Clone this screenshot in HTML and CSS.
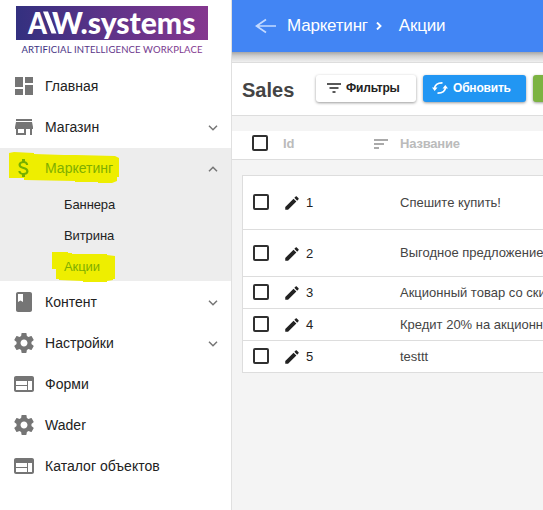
FILE: index.html
```html
<!DOCTYPE html>
<html lang="ru">
<head>
<meta charset="utf-8">
<title>AIW.systems</title>
<link rel="stylesheet" href="styles.css">
</head>
<body>
<svg width="0" height="0" class="defs">
  <symbol id="dash" viewBox="0 0 24 24"><path d="M3 13h8V3H3v10zm0 8h8v-6H3v6zm10 0h8V11h-8v10zm0-18v6h8V3h-8z"/></symbol>
  <symbol id="store" viewBox="0 0 24 24"><path d="M20 4H4v2h16V4zm1 10v-2l-1-5H4l-1 5v2h1v6h10v-6h4v6h2v-6h1zm-9 4H6v-4h6v4z"/></symbol>
  <symbol id="money" viewBox="0 0 24 24"><path d="M11.8 10.9c-2.27-.59-3-1.2-3-2.15 0-1.09 1.01-1.85 2.7-1.85 1.78 0 2.44.85 2.5 2.1h2.21c-.07-1.72-1.12-3.3-3.21-3.81V3h-3v2.16c-1.94.42-3.5 1.68-3.5 3.61 0 2.31 1.91 3.46 4.7 4.13 2.5.6 3 1.48 3 2.41 0 .69-.49 1.79-2.7 1.79-2.06 0-2.87-.92-2.98-2.1h-2.2c.12 2.19 1.76 3.42 3.68 3.83V21h3v-2.15c1.95-.37 3.5-1.5 3.5-3.55 0-2.84-2.43-3.81-4.7-4.4z"/></symbol>
  <symbol id="book" viewBox="0 0 24 24"><path fill-rule="evenodd" d="M18 2H6c-1.1 0-2 .9-2 2v16c0 1.100.9 2 2 2h12c1.100 0 2-.9 2-2V4c0-1.100-.9-2-2-2zM6 4h5v8l-2.500-1.500L6 12V4z"/></symbol>
  <symbol id="gear" viewBox="0 0 24 24"><path d="M19.430 12.980c.04-.32.070-.64.070-.98s-.03-.66-.07-.98l2.110-1.650c.19-.15.240-.42.120-.64l-2-3.460c-.12-.22-.39-.3-.61-.22l-2.490 1c-.52-.4-1.080-.73-1.690-.98l-.38-2.650C14.460 2.180 14.250 2 14 2h-4c-.25 0-.46.180-.49.420l-.38 2.650c-.61.250-1.170.59-1.690.980l-2.490-1c-.23-.09-.49 0-.61.220l-2 3.460c-.13.220-.07.490.12.640l2.110 1.650c-.04.320-.07.650-.07.980s.03.660.070.980l-2.110 1.650c-.19.150-.24.420-.12.640l2 3.460c.12.220.39.300.61.220l2.490-1c.52.400 1.080.730 1.690.980l.38 2.650c.03.240.24.420.49.420h4c.25 0 .46-.18.490-.42l.38-2.650c.61-.25 1.170-.59 1.690-.98l2.490 1c.23.090.49 0 .61-.22l2-3.460c.12-.22.070-.49-.12-.64l-2.110-1.650zM12 15.500c-1.930 0-3.500-1.570-3.500-3.500s1.570-3.500 3.500-3.500 3.500 1.570 3.500 3.500-1.570 3.500-3.500 3.500z"/></symbol>
  <symbol id="web" viewBox="0 0 24 24"><path fill-rule="evenodd" d="M20 4H4c-1.100 0-2 .9-2 2v12c0 1.100.9 2 2 2h16c1.100 0 2-.9 2-2V6c0-1.100-.9-2-2-2zM15 18H4v-4h11v4zM15 13H4V9h11v4zM20 18h-4V9h4v9z"/></symbol>
  <symbol id="down" viewBox="0 0 10 6"><path d="M1 .8l4 4 4-4" fill="none" stroke="currentColor" stroke-width="1.500"/></symbol>
  <symbol id="up" viewBox="0 0 10 6"><path d="M1 5.200l4-4 4 4" fill="none" stroke="currentColor" stroke-width="1.500"/></symbol>
  <symbol id="pencil" viewBox="0 0 24 24"><path d="M3 17.250V21h3.750L17.810 9.940l-3.750-3.750L3 17.250zM20.710 7.040c.39-.39.390-1.020 0-1.410l-2.340-2.340c-.39-.39-1.020-.39-1.410 0l-1.830 1.830 3.750 3.750 1.830-1.830z"/></symbol>
</svg>
<div class="app">
  <aside class="sidebar">
    <div class="logo">
      <svg width="192" height="50" viewBox="0 0 192 50">
        <defs><linearGradient id="brand" gradientUnits="userSpaceOnUse" x1="0" y1="0" x2="192" y2="0"><stop offset="0" stop-color="#33307f"/><stop offset=".5" stop-color="#603389"/><stop offset="1" stop-color="#85378f"/></linearGradient></defs>
        <rect width="192" height="34" fill="url(#brand)"/>
        <g class="logo-name"><text x="12" y="27.500" textLength="19" lengthAdjust="spacingAndGlyphs">A</text><text x="36" y="27.500" textLength="31" lengthAdjust="spacingAndGlyphs">W</text><text x="64.500" y="27.500" textLength="115" lengthAdjust="spacingAndGlyphs">.systems</text></g>
        <path d="M27 5.500h5l8.500 22h-5z" fill="#fff"/>
        <text class="logo-sub" x="5.500" y="46.500" textLength="181" fill="url(#brand)">ARTIFICIAL INTELLIGENCE WORKPLACE</text>
      </svg>
    </div>
    <nav>
      <a class="item upper"><svg class="ico"><use href="#dash"/></svg><span>Главная</span></a>
      <a class="item upper"><svg class="ico"><use href="#store"/></svg><span>Магазин</span><svg class="chev"><use href="#down"/></svg></a>
      <div class="group">
        <svg class="mark" width="120" height="134" viewBox="0 148 120 134"><path d="M9 153l5-1 20 1v1l30 1h12l39 1 4 2v19h-2v4l-5 2H98v-1H75v-1l-51-1v-2H9zM52 252h16v1h4v1h35v1l8 1v23h-2v1l-6 1v1H83v-1l-24-1v-1h-3v-10h-4z"/></svg>
        <a class="item upper current"><svg class="ico"><use href="#money"/></svg><span>Маркетинг</span><svg class="chev"><use href="#up"/></svg></a>
        <a class="sub">Баннера</a>
        <a class="sub">Витрина</a>
        <a class="sub current">Акции</a>
      </div>
      <a class="item"><svg class="ico"><use href="#book"/></svg><span>Контент</span><svg class="chev"><use href="#down"/></svg></a>
      <a class="item"><svg class="ico"><use href="#gear"/></svg><span>Настройки</span><svg class="chev"><use href="#down"/></svg></a>
      <a class="item"><svg class="ico"><use href="#web"/></svg><span>Форми</span></a>
      <a class="item"><svg class="ico"><use href="#gear"/></svg><span>Wader</span></a>
      <a class="item"><svg class="ico"><use href="#web"/></svg><span>Каталог объектов</span></a>
    </nav>
  </aside>
  <main>
    <header class="topbar">
      <svg class="back" width="22" height="16" viewBox="0 0 22 16"><path d="M11 1.500L1.500 8l9.500 6.500M1.500 8H21" fill="none" stroke="#c4daff" stroke-width="1.700"/></svg>
      <span>Маркетинг</span>
      <svg class="sep" width="6" height="8" viewBox="0 0 6 8"><path d="M1 .5L4.500 4 1 7.500" fill="none" stroke="#fff" stroke-width="1.900"/></svg>
      <span>Акции</span>
    </header>
    <div class="shade"></div>
    <section class="toolbar">
      <h1>Sales</h1>
      <button class="btn filter"><svg width="14" height="10" viewBox="0 0 14 10"><path d="M0 1h14M2.500 5h9M5.500 9h3" stroke="#222" stroke-width="1.700"/></svg><span>Фильтры</span></button>
      <button class="btn refresh"><svg width="16" height="12" viewBox="0 0 16 12"><path d="M2.500 7C2.500 3 5.500.8 10.500.9M13.500 5c0 4-3 6.200-8 6.100" fill="none" stroke="#fff" stroke-width="1.700"/><path d="M0 5.500h5.500L2.700 9zM10.500 6.500L13.300 3 16 6.500z" fill="#fff"/></svg><span>Обновить</span></button>
      <button class="btn add"></button>
    </section>
    <div class="thead"><i class="box"></i><b class="id">Id</b><svg class="sort" width="14" height="10" viewBox="0 0 14 10"><path d="M0 1h14M0 5h10M0 9h5" stroke="#aaa" stroke-width="2"/></svg><b>Название</b></div>
    <div class="table">
      <div class="row r1"><i class="box"></i><svg class="pen"><use href="#pencil"/></svg><span class="num">1</span><span>Спешите купить!</span></div>
      <div class="row r2"><i class="box"></i><svg class="pen"><use href="#pencil"/></svg><span class="num">2</span><span>Выгодное предложение</span></div>
      <div class="row"><i class="box"></i><svg class="pen"><use href="#pencil"/></svg><span class="num">3</span><span>Акционный товар со скидкой</span></div>
      <div class="row"><i class="box"></i><svg class="pen"><use href="#pencil"/></svg><span class="num">4</span><span>Кредит 20% на акционные</span></div>
      <div class="row"><i class="box"></i><svg class="pen"><use href="#pencil"/></svg><span class="num">5</span><span>testtt</span></div>
    </div>
  </main>
</div>
</body>
</html>
```
FILE: styles.css
```css
* { box-sizing: border-box; }
body { margin: 0; font-family: "Liberation Sans", Arial, sans-serif; color: #222; overflow: hidden; }
svg { display: block; flex: none; fill: currentColor; }
.defs { position: absolute; }
.app { display: flex; width: 543px; height: 510px; overflow: hidden; }
.sidebar { flex: none; width: 232px; background: #fff; border-right: 1px solid #e0e0e0; }
.logo { height: 66px; padding: 6px 0 0 16px; }
.logo-name { font: 900 30px Lato, sans-serif; fill: #fff; }
.logo-sub { font: 9.5px Lato, sans-serif; }
.item { display: flex; align-items: center; height: 41px; padding: 0 13px 0 12px; font-size: 14px; letter-spacing: .02px; position: relative; }
.item.upper { padding-bottom: 2px; }
.item span { flex: 1; margin-left: 9px; }
.ico { width: 24px; height: 24px; color: #757575; }
.chev { width: 10px; height: 6px; margin-top: 2px; color: #757575; }
.group { position: relative; height: 133px; background: #ededed; }
.mark { position: absolute; left: 0; top: 0; color: #eeee00; }
.sub { position: relative; display: flex; align-items: center; height: 31px; padding-left: 64px; font-size: 13px; letter-spacing: -.1px; }
.current span, .sub.current { color: #7fae00; }
.current .ico { color: #76b000; }
main { flex: none; width: 311px; background: #f4f4f4; overflow: hidden; }
.topbar { display: flex; align-items: center; height: 52px; padding-left: 23px; background: #4285f4; color: #fff; font-size: 17px; letter-spacing: -.2px; }
.topbar span { line-height: 20px; }
.back { margin-right: 10px; }
.sep { margin: 0 17px 0 8px; }
.shade { height: 10px; background: linear-gradient(#a6a6a6, #d0d0d0 40%, #f0f0f0); }
.toolbar { display: flex; width: 400px; height: 54px; padding: 12px 0 0 10px; background: #fff; border: solid #ddd; border-width: 1px 0; }
h1 { width: 74px; margin: 0; font-size: 20px; line-height: 30px; color: #444; }
.btn { display: flex; align-items: center; height: 27px; padding: 0 0 1px; border: 0; border-radius: 3px; box-shadow: 0 1px 3px rgba(0,0,0,.4); font: 700 12px "Liberation Sans", sans-serif; letter-spacing: -.2px; }
.filter { width: 100px; margin-right: 7px; padding-left: 11px; gap: 5px; background: #fff; color: #222; }
.refresh { width: 103px; margin-right: 7px; padding-left: 9px; gap: 5px; background: #2196f3; color: #fff; }
.add { width: 80px; background: #7cb342; }
.thead { display: flex; align-items: center; height: 29px; margin-top: 15px; padding: 0 0 5px 20px; background: #fff; border-bottom: 1px solid #ddd; font-size: 13px; letter-spacing: -.2px; color: #bbb; }
.thead b { line-height: 16px; padding-top: 2px; }
.sort { margin: 2px 12px 0 0; }
.box { flex: none; width: 16px; height: 16px; border: 2px solid #303030; border-radius: 2px; background: #fff; }
.id { width: 91px; margin-left: 15px; }
.table { width: 400px; margin: 15px 0 0 10px; border: 1px solid #ddd; border-bottom: 0; background: #fff; }
.row { display: flex; align-items: center; height: 32px; padding: 0 0 1px 10px; border-bottom: 1px solid #ddd; font-size: 13px; color: #444; white-space: nowrap; }
.r1 { height: 54px; }
.r2 { height: 47px; }
.pen { width: 18px; height: 18px; margin: 2px 0 0 14px; color: #222; }
.num { width: 94px; margin-left: 5px; padding-top: 1px; color: #222; }
```
